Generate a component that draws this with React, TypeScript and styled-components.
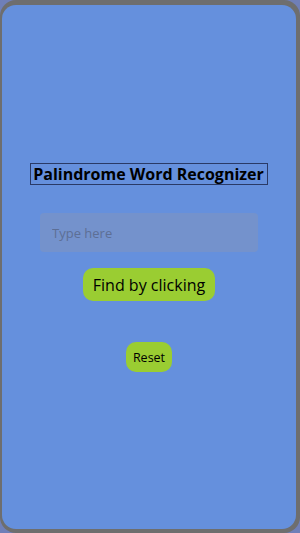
import React, { useState } from "react";
import styled, { createGlobalStyle } from "styled-components";

const Global = createGlobalStyle`
  html, body { margin: 0; padding: 0; background: #6f7fb8; }
  body { font-family: "Open Sans", "Noto Sans", "Liberation Sans", sans-serif; }
  * { box-sizing: border-box; }
`;

const Frame = styled.div`
  width: 300px;
  height: 533px;
  background: #6e6e6e;
  border-radius: 16px;
  padding: 5px 4px 4px 2px;
  display: flex;
`;

const Card = styled.div`
  flex: 1;
  background: #6590dd;
  border-radius: 14px;
  display: flex;
  flex-direction: column;
  align-items: center;
  padding-top: 158px;
`;

const Title = styled.h1`
  margin: 0;
  font-size: 16px;
  font-weight: 700;
  color: #000;
  border: 1px solid #2a3a66;
  padding: 0 3px 0 2px;
  line-height: 20px;
`;

const Input = styled.input`
  margin-top: 28px;
  width: 218px;
  height: 39px;
  border: none;
  border-radius: 4px;
  background: #7492cc;
  padding: 0 12px;
  font-family: inherit;
  font-size: 13px;
  color: #333;
  outline: none;
  &::placeholder { color: #5d6f95; }
`;

const Button = styled.button<{ $big?: boolean }>`
  margin-top: ${(p) => (p.$big ? "16px" : "41px")};
  background: #9acd32;
  border: none;
  border-radius: 10px;
  color: #000;
  font-family: inherit;
  font-size: ${(p) => (p.$big ? "16px" : "12.5px")};
  height: ${(p) => (p.$big ? "33px" : "30px")};
  padding: ${(p) => (p.$big ? "0 10px" : "0 7px")};
  cursor: pointer;
`;

export default function App() {
  const [v, setV] = useState("");
  return (
    <>
      <Global />
      <Frame>
        <Card>
          <Title>Palindrome Word Recognizer</Title>
          <Input placeholder="Type here" value={v} onChange={(e) => setV(e.target.value)} />
          <Button $big>Find by clicking</Button>
          <Button onClick={() => setV("")}>Reset</Button>
        </Card>
      </Frame>
    </>
  );
}
